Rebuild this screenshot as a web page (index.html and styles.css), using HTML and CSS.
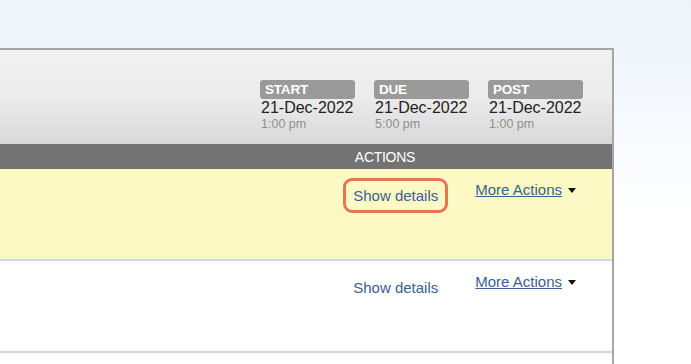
FILE: index.html
```html
<!DOCTYPE html>
<html lang="en">
<head>
    <meta charset="UTF-8">
    <meta name="viewport" content="width=device-width, initial-scale=1.0">
    <title>Assignments</title>
    <link rel="stylesheet" href="styles.css">
</head>
<body>
    <div class="page">
        <div class="panel">
            <!-- Header with dates -->
            <div class="panel-head">
                <div class="date-col">
                    <span class="badge">START</span>
                    <div class="date">21-Dec-2022</div>
                    <div class="time">1:00 pm</div>
                </div>
                <div class="date-col">
                    <span class="badge">DUE</span>
                    <div class="date">21-Dec-2022</div>
                    <div class="time">5:00 pm</div>
                </div>
                <div class="date-col">
                    <span class="badge">POST</span>
                    <div class="date">21-Dec-2022</div>
                    <div class="time">1:00 pm</div>
                </div>
            </div>

            <!-- Column bar -->
            <div class="col-bar">
                <span class="col-title">ACTIONS</span>
            </div>

            <!-- Rows -->
            <div class="row row-active">
                <a href="#" class="details highlighted">Show details</a>
                <a href="#" class="more">More Actions</a>
                <span class="caret"></span>
            </div>
            <div class="row">
                <a href="#" class="details">Show details</a>
                <a href="#" class="more">More Actions</a>
                <span class="caret"></span>
            </div>
            <div class="row row-empty"></div>
        </div>
    </div>
</body>
</html>
```

FILE: styles.css
```css
body {
    margin: 0;
    font-family: "Liberation Sans", Arial, sans-serif;
    background: linear-gradient(180deg, #edf4fb 0px, #f6f9fd 120px, #ffffff 220px);
    height: 364px;
    overflow: hidden;
}

.page {
    padding-top: 48px;
}

.panel {
    width: 612px;
    border-top: 2px solid #a6a6a6;
    border-right: 2px solid #a6a6a6;
    background: #fff;
}

/* Header with dates */
.panel-head {
    height: 94px;
    box-sizing: border-box;
    padding: 30px 29px 0 0;
    display: flex;
    justify-content: flex-end;
    gap: 19px;
    background: linear-gradient(180deg, #f1f1f1 0%, #ececec 50%, #d8d8d8 100%);
}

.date-col {
    width: 95px;
}

.badge {
    display: block;
    height: 19px;
    line-height: 19px;
    background: #9a9a9a;
    border-radius: 3px;
    color: #fff;
    font-weight: bold;
    font-size: 13.5px;
    letter-spacing: -0.2px;
    padding-left: 5px;
}

.date {
    font-size: 16px;
    line-height: 18px;
    color: #222;
    margin-left: 1px;
}

.time {
    font-size: 12.5px;
    line-height: 15px;
    color: #8f8f8f;
    margin-left: 1px;
}

/* Column bar */
.col-bar {
    height: 25px;
    background: #737373;
    display: flex;
    justify-content: flex-end;
    align-items: center;
}

.col-title {
    color: #fff;
    font-size: 14px;
    letter-spacing: -0.3px;
    margin-right: 197px;
}

/* Rows */
.row {
    height: 90px;
    border-bottom: 2px solid #cbd9e8;
    display: flex;
    justify-content: flex-end;
    align-items: flex-start;
    padding-right: 36px;
}

.row-active {
    background: #fdf9c5;
}

.details {
    margin-top: 9px;
    padding: 6px 7px;
    border: 3px solid transparent;
    border-radius: 9px;
    font-size: 15px;
    line-height: 17px;
    color: #3b6190;
    text-decoration: none;
}

.details.highlighted {
    border-color: #e8754f;
}

.more {
    margin-top: 12px;
    margin-left: 27px;
    font-size: 15px;
    line-height: 18px;
    color: #3b6190;
    text-decoration: underline;
}

.caret {
    margin: 19px 0 0 6px;
    width: 0;
    height: 0;
    border-left: 4px solid transparent;
    border-right: 4px solid transparent;
    border-top: 5px solid #111;
}

.row-empty {
    height: 20px;
    border-bottom: none;
}
```
